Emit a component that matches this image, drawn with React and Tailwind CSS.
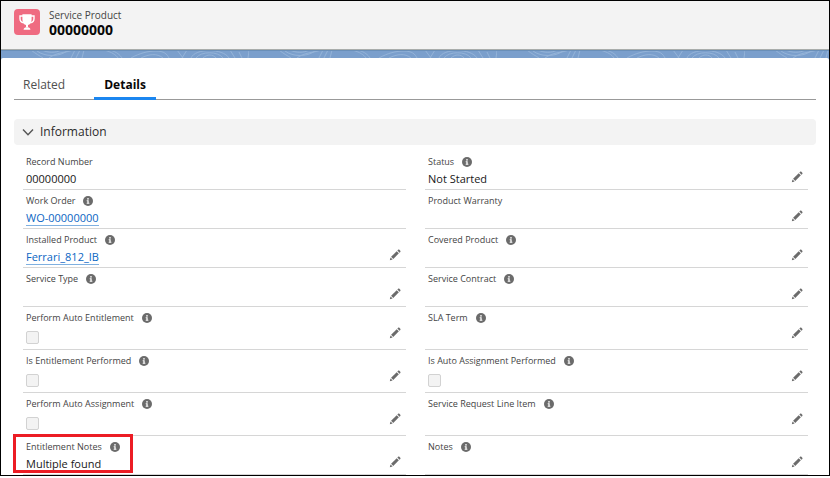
import React from "react";

const FIELDS = [
  [
    { label: "Record Number", value: "00000000" },
    { label: "Status", info: true, value: "Not Started", edit: true },
  ],
  [
    { label: "Work Order", info: true, link: "WO-00000000" },
    { label: "Product Warranty", edit: true },
  ],
  [
    { label: "Installed Product", info: true, link: "Ferrari_812_IB", edit: true },
    { label: "Covered Product", info: true, edit: true },
  ],
  [
    { label: "Service Type", info: true, edit: true },
    { label: "Service Contract", info: true, edit: true },
  ],
  [
    { label: "Perform Auto Entitlement", info: true, check: true, edit: true },
    { label: "SLA Term", info: true, edit: true },
  ],
  [
    { label: "Is Entitlement Performed", info: true, check: true, edit: true },
    { label: "Is Auto Assignment Performed", info: true, check: true, edit: true },
  ],
  [
    { label: "Perform Auto Assignment", info: true, check: true, edit: true },
    { label: "Service Request Line Item", info: true, edit: true },
  ],
  [
    { label: "Entitlement Notes", info: true, value: "Multiple found", edit: true, highlight: true },
    { label: "Notes", info: true, edit: true },
  ],
];

function InfoIcon() {
  return (
    <svg viewBox="0 0 20 20" className="size-[10px]" aria-hidden="true">
      <circle cx="10" cy="10" r="10" fill="#6b6b6b" />
      <circle cx="10" cy="5.6" r="1.7" fill="#fff" />
      <path d="M7.4 8.6h3.9v5h1.4v1.8H7.4v-1.8h1.4v-3.2H7.4z" fill="#fff" />
    </svg>
  );
}

function PencilIcon() {
  return (
    <svg viewBox="0 0 24 24" className="size-3" fill="#6b6b6b" aria-hidden="true">
      <path d="M1.6 22.6 3 16.9l4.3 4.3z" />
      <path d="M4.2 15.6 15.4 4.4l4.3 4.3L8.5 19.9z" />
      <path d="m16.7 3.1 1.6-1.6c.7-.7 1.7-.7 2.4 0l1.9 1.9c.7.7.7 1.7 0 2.4L21 7.4z" />
    </svg>
  );
}

function TrophyIcon() {
  return (
    <svg viewBox="0 0 26 26" className="mt-px size-[26px] shrink-0 rounded bg-[#ef6b81]" aria-hidden="true">
      <path d="M9 7H6v2.4c0 2.4 1.4 4 3.8 4.4M17 7h3v2.4c0 2.4-1.4 4-3.8 4.4" fill="none" stroke="#fff" strokeWidth="1.4" />
      <path d="M8.4 5.2h9.2v5.2c0 3.2-1.6 5.2-3.6 5.7v2.2h-2v-2.2c-2-.5-3.6-2.5-3.6-5.7z" fill="#fff" />
      <path d="M9.6 20.8c0-1.6 1.2-2.6 2.6-2.6h1.6c1.4 0 2.6 1 2.6 2.6z" fill="#fff" />
    </svg>
  );
}

function Topography() {
  return (
    <svg className="block h-2 w-full" aria-hidden="true">
      <defs>
        <pattern id="contours" width="248" height="8" patternUnits="userSpaceOnUse">
          <g fill="none" stroke="#94b3d8" strokeWidth="1">
            <path d="M30 0c5 4 9 6 12 8M36 1c8 6 22 6 30 0M41 0c6 3 14 3 19 0M48 8c8-6 16-5 24-8M70 8l4-8M75 8l4-8M81 8l2-8M103 0c8 2 12 5 14 8M109 0c7 2 10 5 12 8M130 8c9-5 17-7 25-7s11 3 13 7M140 8c8-4 16-5 22 0M176 0l6 8M186 0l-5 8M190 8c4-10 32-10 38 0M195 8c5-7 22-7 27 0M202 8c4-4 10-4 13 0M229 0l5 8M238 2l3 6M248 1l-1 7" />
          </g>
        </pattern>
      </defs>
      <rect width="100%" height="100%" fill="#7b9fcc" />
      <rect width="100%" height="100%" fill="url(#contours)" />
      <rect width="100%" height="1" fill="#6a8fb8" />
    </svg>
  );
}

function Field({ field }) {
  const id = field.label.toLowerCase().replaceAll(" ", "-");
  return (
    <div className="relative flex items-start justify-between border-b border-[#d6d6d6] pt-1 pr-[5px] pl-[3px]">
      <div>
        <div className="flex h-[14px] items-center gap-2 text-[9px] text-[#444]">
          {field.check ? <label htmlFor={id}>{field.label}</label> : <span>{field.label}</span>}
          {field.info && <InfoIcon />}
        </div>
        {field.check ? (
          <div className="flex h-6 items-center">
            <input
              id={id}
              type="checkbox"
              disabled
              className="size-[13px] appearance-none rounded-xs border border-[#d2d2d2] bg-[#f3f3f3]"
            />
          </div>
        ) : (
          <div className="flex h-5 items-center text-[11px] text-[#181818]">
            {field.link ? (
              <a href="#" className="border-b border-[#7fb0e0] leading-[14px] text-[#0b66c3]">
                {field.link}
              </a>
            ) : (
              field.value
            )}
          </div>
        )}
      </div>
      {field.edit && (
        <button type="button" aria-label={"Edit " + field.label} className="mt-4">
          <PencilIcon />
        </button>
      )}
      {field.highlight && (
        <div className="pointer-events-none absolute -top-0.5 -left-[10px] h-[39px] w-[120px] border-3 border-[#ec1c24]" />
      )}
    </div>
  );
}

export default function App() {
  return (
    <main className="mb-0.5 border border-black bg-white font-['Open_Sans','Noto_Sans',sans-serif]">
      <header className="flex items-start gap-[9px] border-b border-[#a9adab] bg-[#f3f3f3] px-[13px] pt-[7px] pb-[11px]">
        <TrophyIcon />
        <div>
          <p className="text-[10px] leading-[14px] text-[#444]">Service Product</p>
          <h1 className="text-[14px] leading-[16px] font-bold text-[#080707]">00000000</h1>
        </div>
      </header>
      <div className="bg-[#7b9fcc]">
        <Topography />
        <div className="rounded-t-xs bg-white px-[13px] pt-[15px]">
          <nav className="flex gap-5 border-b border-[#999] text-[12px] leading-6">
            <a href="#" className="px-[9px] text-[#505050]">Related</a>
            <a href="#" className="-mb-px border-b-3 border-[#1b86f0] px-[10px] font-bold text-[#080707]">Details</a>
          </nav>
          <section className="pt-[19px]">
            <h2>
              <button type="button" className="flex h-[26px] w-full items-center gap-1.5 rounded bg-[#f3f3f3] px-2 text-[12px] text-[#2b2b2b]">
                <svg viewBox="0 0 12 12" className="size-3" fill="none" stroke="#555" strokeWidth="1.4" aria-hidden="true">
                  <path d="M1 3.5 6 8.7l5-5.2" />
                </svg>
                Information
              </button>
            </h2>
            <div className="grid grid-cols-2 gap-x-[19px] pt-[6px] pr-2 pl-[9px]">
              {FIELDS.flat().map((field) => (
                <Field key={field.label} field={field} />
              ))}
            </div>
          </section>
        </div>
      </div>
    </main>
  );
}
